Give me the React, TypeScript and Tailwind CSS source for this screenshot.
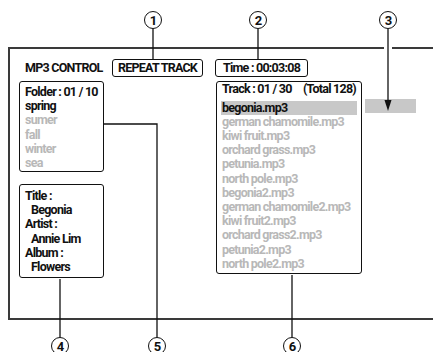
import React from 'react';

const folders = ['spring', 'sumer', 'fall', 'winter', 'sea'];

const tracks = [
    'begonia.mp3',
    'german chamomile.mp3',
    'kiwi fruit.mp3',
    'orchard grass.mp3',
    'petunia.mp3',
    'north pole.mp3',
    'begonia2.mp3',
    'german chamomile2.mp3',
    'kiwi fruit2.mp3',
    'orchard grass2.mp3',
    'petunia2.mp3',
    'north pole2.mp3',
];

const callouts = [
    { n: '1', x: 153, y: 20 },
    { n: '2', x: 258, y: 20 },
    { n: '3', x: 388, y: 20 },
    { n: '4', x: 60, y: 346 },
    { n: '5', x: 157, y: 346 },
    { n: '6', x: 292, y: 346 },
];

const Callouts = () => (
    <svg
        className="absolute inset-0 pointer-events-none"
        width={433}
        height={352}
        viewBox="0 0 433 352"
    >
        {/* break in the frame where line 3 crosses */}
        <rect x={384} y={46} width={8} height={4} fill="#fff" />
        <g stroke="#111" strokeWidth={1.3} fill="none">
            <line x1={153} y1={28.5} x2={153} y2={59} />
            <line x1={258} y1={28.5} x2={258} y2={59} />
            <line x1={388} y1={28.5} x2={388} y2={102} />
            <line x1={60} y1={279} x2={60} y2={337.5} />
            <polyline points="104,124 157,124 157,337.5" />
            <line x1={292} y1={275} x2={292} y2={337.5} />
        </g>
        <polygon points="384.5,100 391.5,100 388,111" fill="#111" />
        {callouts.map(c => (
            <g key={c.n}>
                <circle cx={c.x} cy={c.y} r={8.5} fill="#fff" stroke="#111" strokeWidth={1} />
                <text
                    x={c.x}
                    y={c.y + 4.5}
                    textAnchor="middle"
                    fontSize={13}
                    fill="#111"
                    style={{ fontFamily: 'Roboto, sans-serif' }}
                >
                    {c.n}
                </text>
            </g>
        ))}
    </svg>
);

export default function App() {
    return (
        <div className="relative w-[433px] h-[352px] bg-white overflow-hidden font-['Roboto',sans-serif] font-bold text-[12.5px] tracking-[-0.75px] text-[#111]">
            <div className="mt-[47px] ml-[8px] w-[430px] h-[273px] border-t-2 border-l-2 border-b-2 border-[#3a3a3a] pl-[9px] pt-[10px] flex">
                <div className="w-[85px] flex flex-col">
                    <div className="h-[18px] leading-[18px] pl-[6px] whitespace-nowrap">MP3 CONTROL</div>

                    <div className="mt-[4px] h-[91px] border-[1.5px] border-[#111] rounded-[3px] pl-[5px] pt-[3px] leading-[14.2px]">
                        <div className="whitespace-nowrap">Folder : 01 / 10</div>
                        {folders.map((f, i) => (
                            <div key={f} className={i === 0 ? 'text-[#111]' : 'text-[#b8b8b8]'}>{f}</div>
                        ))}
                    </div>

                    <div className="mt-[12px] h-[94px] border-[1.5px] border-[#111] rounded-[3px] pl-[5px] pt-[4px] leading-[14.2px]">
                        <div>Title :</div>
                        <div className="pl-[6px]">Begonia</div>
                        <div>Artist :</div>
                        <div className="pl-[6px]">Annie Lim</div>
                        <div>Album :</div>
                        <div className="pl-[6px]">Flowers</div>
                    </div>
                </div>

                <div className="ml-[8px] flex flex-col">
                    <div className="flex">
                        <div className="w-[91px] h-[18px] border-[1.5px] border-[#111] rounded-[3px] flex items-center justify-center whitespace-nowrap leading-none">
                            REPEAT TRACK
                        </div>
                        <div className="ml-[12px] w-[93px] h-[18px] border-[1.5px] border-[#111] rounded-[3px] flex items-center justify-center whitespace-nowrap leading-none">
                            Time : 00:03:08
                        </div>
                    </div>

                    <div className="flex mt-[4px] ml-[104px]">
                        <div className="w-[146px] h-[193px] border-[1.5px] border-[#111] rounded-[3px] px-[4px] leading-[14.2px]">
                            <div className="flex justify-between whitespace-nowrap px-[1px] h-[14px] leading-[14px]">
                                <span>Track : 01 / 30</span>
                                <span>(Total 128)</span>
                            </div>
                            <div className="mt-[4.5px]">
                                {tracks.map((t, i) => (
                                    <div
                                        key={t}
                                        className={
                                            i === 0
                                                ? 'bg-[#c8c8c8] text-[#111] pl-[1px] h-[14px] leading-[14px] mb-[0.2px] whitespace-nowrap'
                                                : 'text-[#b8b8b8] pl-[1px] whitespace-nowrap'
                                        }
                                    >
                                        {t}
                                    </div>
                                ))}
                            </div>
                        </div>
                        <div className="ml-[3px] mt-[17.5px] w-[51px] h-[14px] bg-[#c8c8c8]" />
                    </div>
                </div>
            </div>

            <Callouts />
        </div>
    );
}
